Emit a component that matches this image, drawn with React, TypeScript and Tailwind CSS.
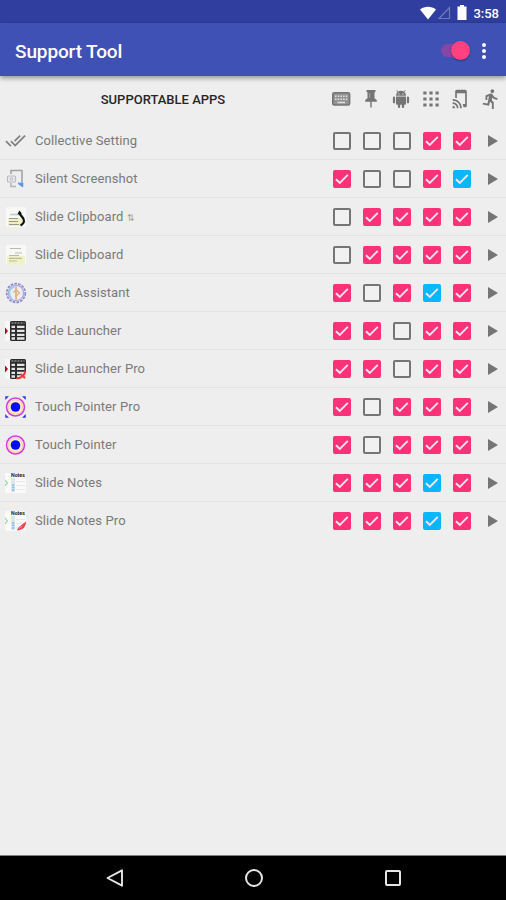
import React from "react";
import { MdDirectionsRun, MdDoneAll, MdTapAndPlay } from "react-icons/md";

type CheckState = "off" | "pink" | "blue";

interface AppRow {
  name: string;
  icon: React.ReactNode;
  suffix?: string;
  checks: CheckState[];
}

const ScreenshotIcon = () => (
  <svg viewBox="0 0 22 22" className="size-[22px]" fill="none">
    <path d="M6 6V2.500h11V15" stroke="#a3a3a3" strokeWidth="1.600" />
    <path d="M6 15v3.500h5" stroke="#b5b5b5" strokeWidth="1.600" />
    <rect x="2.500" y="8" width="8" height="6" rx="1" stroke="#b9b9c2" strokeWidth="1.200" />
    <circle cx="6.500" cy="11" r="1.400" stroke="#b9b9c2" />
    <path d="M13 14.500l5.500.5-.5 4.500-2-1.200-3-2.300z" fill="#5b97f0" />
  </svg>
);

const ClipboardIcon = ({ pen }: { pen?: boolean }) => (
  <svg viewBox="0 0 22 22" className="size-[22px]" fill="none">
    <rect x="1" y="1" width="20" height="20" rx="2" fill="#f8f8f6" />
    {pen ? (
      <>
        <rect x="3" y="12" width="14" height="8" fill="#f0f0c4" />
        <path d="M5 8.500h10" stroke="#b4d3cd" strokeWidth="1.600" />
        <path d="M4 12.500h9M4 15.500h9M4 18.500h10" stroke="#97978a" strokeWidth="1.200" />
        <path d="M14.500 7c.5 3 5 4.500 4.500 8-.2 2.200-1.500 3.500-3.500 4.500" stroke="#111" strokeWidth="2.200" />
        <path d="M12.500 8.500l1.700-4 2.800 3z" fill="#111" />
      </>
    ) : (
      <>
        <rect x="2" y="12" width="18" height="9" fill="#f1f1ca" />
        <path d="M5 4.500h11M10 9h7" stroke="#b9b9b9" strokeWidth="1.200" />
        <path d="M4 11.500h10M4 14.300h13M4 17h8" stroke="#bcbc9c" strokeWidth="1.200" />
      </>
    )}
  </svg>
);

const AssistantIcon = () => (
  <svg viewBox="0 0 22 22" className="size-[22px]" fill="none">
    <circle cx="11" cy="11" r="9.300" stroke="#8e8fd2" strokeWidth="1.800" strokeDasharray="2.700 1.100" />
    <circle cx="11" cy="11" r="7.600" fill="#efedf2" stroke="#a9acd9" strokeWidth="1.300" />
    <path d="M9.500 5A6.300 6.300 0 0 0 7 16" stroke="#93d5e8" strokeWidth="1.300" />
    <path d="M11 4.500v13" stroke="#e3a45e" strokeWidth="1.500" />
    <path d="M8.500 10.500L11 7.500l3.500 3.500-3.500 3" stroke="#dfb389" strokeWidth="1.200" />
  </svg>
);

const LauncherIcon = ({ pro }: { pro?: boolean }) => (
  <svg viewBox="0 0 22 22" className="size-[22px]" fill="none">
    <rect x="0" y="1" width="21" height="20" rx="2" fill="#f7f7f7" />
    <path d="M0 7.500L3 11l-3 3.500z" fill="#a5101c" />
    <rect x="5" y="1" width="16" height="20" rx="1.500" fill="#2b2b2b" />
    <path d="M6.500 3h13" stroke="#8a8a8a" strokeWidth="1.500" strokeDasharray="2 1" />
    <path
      d="M6.500 6.800h3.500M6.500 10.800h3.500M6.500 14.800h3.500M6.500 18.500h3.500M12 6.800h7.500M12 10.800h7.500M12 14.800h7.500M12 18.500h7.500"
      stroke="#e4e4e4"
      strokeWidth="2.300"
    />
    {pro && (
      <>
        <path d="M21 12.500L11 21h10z" fill="#f6d5d5" />
        <path d="M20.500 13c-1 4.500-4 7-9 7.500M15.500 16l4.500 4" stroke="#e8343c" strokeWidth="1.800" />
      </>
    )}
  </svg>
);

const PointerIcon = ({ pro }: { pro?: boolean }) => (
  <svg viewBox="0 0 22 22" className="size-[22px]" fill="none">
    <circle cx="10.500" cy="11" r="9" fill="#fdf0c0" stroke="#d43ada" strokeWidth="1.500" />
    <circle cx="10.500" cy="11" r="7" stroke="#f5c9c4" />
    <circle cx="10.500" cy="11" r="4.800" fill="#0909fa" />
    {pro && (
      <path
        d="M.5 3.500v-3h3zM17.500.500h3v3zM.5 18.500v3h3zM17.500 21.500h3v-3z"
        fill="#2929ee"
        stroke="#2929ee"
        strokeWidth=".4"
      />
    )}
  </svg>
);

const NotesIcon = ({ pro }: { pro?: boolean }) => (
  <svg viewBox="0 0 22 22" className="size-[22px]" fill="none">
    <rect x="0" y="1" width="21" height="20" rx="2" fill="#fafafa" />
    <path d="M0 8l2.500 3L0 14" stroke="#9bdca9" strokeWidth="1.200" />
    <rect x="6" y="6" width="4" height="14" fill="#dfe6ea" />
    <text x="6" y="5.400" fontSize="5.200" fontWeight="bold" fill="#222" fontFamily="Roboto, sans-serif">
      Notes
    </text>
    <path d="M7 13h2.500M7 15.500h2.500M7 18h2.500" stroke="#83bfe9" strokeWidth="1.500" />
    <path d="M11 9.500h9M11 13.500h9M11 17.500h9" stroke="#e8e8e8" />
    {pro && (
      <>
        <path d="M21 11.500c.3 5-3.500 9-9 9 1-4 4.500-5 9-9z" fill="#e94352" />
        <path d="M14 18.500l3-2.500" stroke="#f6a3aa" />
      </>
    )}
  </svg>
);

const KeyboardIcon = () => (
  <svg viewBox="0 0 20 16" className="h-[16px] w-[20px]" fill="none">
    <rect x="1.800" y="1.800" width="16.800" height="12.200" rx="1.500" fill="#949494" stroke="#757575" strokeWidth="1.600" />
    <path d="M4 5.300h12.500M4 8.300h12.500" stroke="#e2e2e2" strokeWidth="1.500" strokeDasharray="1.500 1.200" />
    <path d="M6.500 11.500h7.500" stroke="#e2e2e2" strokeWidth="1.400" />
  </svg>
);

const PinIcon = () => (
  <svg viewBox="0 0 14 20" className="h-[20px] w-[14px]" fill="currentColor">
    <path d="M2.500 1h9v1.800l-1 .7v5.700l2.300 1.800v1.700H7.700V18L7 19l-.7-1v-5.300H1.200V11l2.300-1.800V3.500l-1-.7z" />
    <path d="M5.700 4v5" stroke="#a5a5a5" />
  </svg>
);

const RobotIcon = () => (
  <svg viewBox="0 0 18 20" className="h-[20px] w-[18px]" fill="currentColor">
    <path d="M4 6.800a5 5 0 0 1 10 0z" />
    <path d="M5.800 3L4.700 1.200M12.200 3l1.100-1.800" stroke="currentColor" strokeWidth=".8" />
    <path d="M4 7.500h10v7.300a1 1 0 0 1-1 1H5a1 1 0 0 1-1-1z" />
    <path
      d="M2 8.700v4.600M16 8.700v4.600M7 15v3M11 15v3"
      stroke="currentColor"
      strokeWidth="2.200"
      strokeLinecap="round"
    />
    <circle cx="7" cy="4.900" r=".6" fill="#eee" />
    <circle cx="11" cy="4.900" r=".6" fill="#eee" />
  </svg>
);

const GridIcon = () => (
  <svg viewBox="0 0 16 16" className="size-[16px]" stroke="currentColor" strokeWidth="3.200">
    <path d="M.3 2h3.200M6.400 2h3.200M12.500 2h3.200M.3 8h3.200M6.400 8h3.200M12.500 8h3.200M.3 14h3.200M6.400 14h3.200M12.500 14h3.200" />
  </svg>
);

const Check = ({ state }: { state: CheckState }) => {
  if (state === "off") {
    return (
      <span className="size-[18px] rounded-[2px] border-2 border-[#757575] bg-[#f1f1f1]" />
    );
  }
  return (
    <span
      className={`flex size-[18px] items-center justify-center rounded-[2px] ${
        state === "blue" ? "bg-[#08b7fb]" : "bg-[#fb3278]"
      }`}
    >
      <svg viewBox="0 0 18 18" className="size-[18px]" fill="none">
        <path d="M3 9.200l3.800 3.700 8-8.100" stroke="#fbe4ed" strokeWidth="1.900" />
      </svg>
    </span>
  );
};

const rows: AppRow[] = [
  {
    name: "Collective Setting",
    icon: <MdDoneAll className="size-[21px] text-[#808080]" />,
    checks: ["off", "off", "off", "pink", "pink"],
  },
  {
    name: "Silent Screenshot",
    icon: <ScreenshotIcon />,
    checks: ["pink", "off", "off", "pink", "blue"],
  },
  {
    name: "Slide Clipboard",
    icon: <ClipboardIcon pen />,
    suffix: "⇅",
    checks: ["off", "pink", "pink", "pink", "pink"],
  },
  {
    name: "Slide Clipboard",
    icon: <ClipboardIcon />,
    checks: ["off", "pink", "pink", "pink", "pink"],
  },
  {
    name: "Touch Assistant",
    icon: <AssistantIcon />,
    checks: ["pink", "off", "pink", "blue", "pink"],
  },
  {
    name: "Slide Launcher",
    icon: <LauncherIcon />,
    checks: ["pink", "pink", "off", "pink", "pink"],
  },
  {
    name: "Slide Launcher Pro",
    icon: <LauncherIcon pro />,
    checks: ["pink", "pink", "off", "pink", "pink"],
  },
  {
    name: "Touch Pointer Pro",
    icon: <PointerIcon pro />,
    checks: ["pink", "off", "pink", "pink", "pink"],
  },
  {
    name: "Touch Pointer",
    icon: <PointerIcon />,
    checks: ["pink", "off", "pink", "pink", "pink"],
  },
  {
    name: "Slide Notes",
    icon: <NotesIcon />,
    checks: ["pink", "pink", "pink", "blue", "pink"],
  },
  {
    name: "Slide Notes Pro",
    icon: <NotesIcon pro />,
    checks: ["pink", "pink", "pink", "blue", "pink"],
  },
];

const columnIcons = [
  <KeyboardIcon />,
  <PinIcon />,
  <RobotIcon />,
  <GridIcon />,
  <MdTapAndPlay className="size-[20px]" />,
  <MdDirectionsRun className="size-[22px]" />,
];

const StatusBar = () => (
  <div className="flex h-[23px] items-center justify-end bg-[#303f9f] pr-[7px] text-white">
    <svg viewBox="0 0 18 14" className="mt-[2px] h-[14px] w-[18px]" fill="currentColor">
      <path d="M1 3.500C5.500-.2 12.500-.2 17 3.500L9 13.500z" />
    </svg>
    <svg viewBox="0 0 14 14" className="mt-[2px] h-[14px] w-[14px]" fill="none">
      <path d="M2 12.500h10.500V1.500z" stroke="#6d78bd" strokeWidth="1.200" />
    </svg>
    <svg viewBox="0 0 10 15" className="mt-[2px] ml-[6px] h-[15px] w-[10px]" fill="currentColor">
      <path d="M3 0h4v1.500h2.500V15H.5V1.500H3z" />
    </svg>
    <span className="mt-[3px] ml-[6px] text-[13px] leading-none font-medium">3:58</span>
  </div>
);

const Toolbar = () => (
  <div className="relative flex h-[53px] items-center bg-[#3f51b5] pr-[20px] pl-[15px] text-white shadow-[0_2px_5px_rgba(0,0,0,0.4)]">
    <h1 className="flex-1 pt-[3px] text-[19px] leading-none font-medium tracking-[-0.12px]">
      Support Tool
    </h1>
    {/* Switch */}
    <div className="mt-[2px] mr-[12px] flex h-[13px] w-[29px] items-center justify-end rounded-full bg-[#8547a3]">
      <span className="size-[19px] shrink-0 rounded-full bg-[#ff4081] shadow-[0_1px_2px_rgba(0,0,0,0.35)]" />
    </div>
    <div className="mt-[2px] flex flex-col gap-[2px]">
      <span className="size-[4px] rounded-full bg-white" />
      <span className="size-[4px] rounded-full bg-white" />
      <span className="size-[4px] rounded-full bg-white" />
    </div>
  </div>
);

const NavBar = () => (
  <div className="flex h-[45px] items-center border-t border-[#808080] bg-black pr-[44px] pl-[46px] text-[#e6e6e6]">
    <div className="flex flex-1 justify-center">
      <svg viewBox="0 0 20 20" className="size-[20px]" fill="none" stroke="currentColor" strokeWidth="1.900">
        <path d="M17 2.300v15.400L2.500 10z" strokeLinejoin="round" />
      </svg>
    </div>
    <div className="flex flex-1 justify-center">
      <span className="size-[18px] rounded-full border-2 border-[#e6e6e6]" />
    </div>
    <div className="flex flex-1 justify-center">
      <span className="size-[16px] rounded-[2px] border-2 border-[#e6e6e6]" />
    </div>
  </div>
);

const App = () => {
  return (
    <div className="flex h-[900px] w-[506px] flex-col overflow-hidden bg-[#eeeeee] font-['Roboto',sans-serif]">
      <StatusBar />
      <Toolbar />

      {/* Column headings */}
      <div className="flex h-[46px] shrink-0 items-center">
        <div className="w-[327px] pt-[2px] text-center text-[13px] font-medium text-[#262626]">
          SUPPORTABLE APPS
        </div>
        {columnIcons.map((icon, i) => (
          <div key={i} className="flex w-[30px] shrink-0 justify-center text-[#757575]">
            {icon}
          </div>
        ))}
      </div>

      <div className="flex-1">
        {rows.map((row, i) => (
          <div key={i} className="flex h-[38px] items-center border-b border-[#e3e3e3] last:border-transparent">
            <div className="flex w-[35px] shrink-0 pl-[5px]">{row.icon}</div>
            <div className="w-[292px] shrink-0 pt-px text-[13px] tracking-[0.1px] text-[#7a7a7a]">
              {row.name}
              {row.suffix && <span className="ml-1 text-[9px] text-[#a0a0a0]">{row.suffix}</span>}
            </div>
            {row.checks.map((state, j) => (
              <div key={j} className="flex w-[30px] shrink-0 justify-center">
                <Check state={state} />
              </div>
            ))}
            <div className="flex w-[30px] shrink-0 justify-center pl-[2px]">
              <svg viewBox="0 0 10 12" className="h-[12px] w-[10px]" fill="#757575">
                <path d="M0 0l10 6-10 6z" />
              </svg>
            </div>
          </div>
        ))}
      </div>

      <NavBar />
    </div>
  );
};

export default App;
